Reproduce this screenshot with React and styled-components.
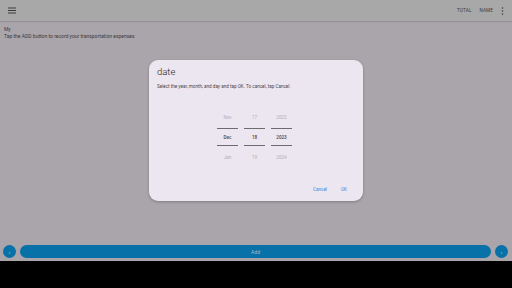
import React from "react";
import styled, { createGlobalStyle } from "styled-components";

const GlobalStyle = createGlobalStyle`
  html, body {
    margin: 0;
    padding: 0;
    width: 512px;
    height: 288px;
    overflow: hidden;
    font-family: Roboto, "Noto Sans", sans-serif;
  }
`;

const Screen = styled.div`
  position: relative;
  width: 512px;
  height: 288px;
  display: flex;
  flex-direction: column;
  background: #aaa5ab;
`;

const AppBar = styled.div`
  height: 21px;
  display: flex;
  align-items: center;
  padding: 0 8px 0 8px;
  background: #a8a8a8;
  box-shadow: 0 1px 1px rgba(0, 0, 0, 0.12);
  color: #3d3d3d;
`;

const Spacer = styled.div`
  flex: 1;
`;

const BarAction = styled.span`
  font-size: 4.5px;
  letter-spacing: 0.2px;
  margin-right: 8px;
  color: #3a3a3a;
`;

const Content = styled.div`
  flex: 1;
  padding: 5px 4px;
  font-size: 5px;
  line-height: 7px;
  color: #3c3a3d;
`;

const BottomRow = styled.div`
  height: 15px;
  display: flex;
  align-items: center;
  gap: 4px;
  padding: 0 4px 2px 3px;
`;

const RoundButton = styled.div`
  width: 13px;
  height: 13px;
  border-radius: 50%;
  background: #0872a8;
  color: #b9c7d3;
  display: flex;
  align-items: center;
  justify-content: center;
  font-size: 6px;
  line-height: 1;
`;

const AddButton = styled.div`
  flex: 1;
  height: 13px;
  border-radius: 7px;
  background: #0872a8;
  color: #a9b7c4;
  display: flex;
  align-items: center;
  justify-content: center;
  font-size: 5px;
`;

const NavBar = styled.div`
  height: 27px;
  background: #000;
`;

const Overlay = styled.div`
  position: absolute;
  left: 0;
  top: 0;
  width: 512px;
  height: 261px;
  display: flex;
  align-items: center;
  justify-content: center;
`;

const Dialog = styled.div`
  width: 214px;
  height: 141px;
  box-sizing: border-box;
  border-radius: 9px;
  background: #ece6f0;
  box-shadow: 0 1px 3px rgba(0, 0, 0, 0.25);
  padding: 6px 8px 8px 8px;
  display: flex;
  flex-direction: column;
`;

const Title = styled.div`
  font-size: 9.5px;
  line-height: 12px;
  font-weight: 300;
  color: #1d1b20;
`;

const Body = styled.div`
  margin-top: 6px;
  font-size: 4.6px;
  color: #49454f;
`;

const Picker = styled.div`
  margin-top: 17px;
  display: flex;
  justify-content: center;
  gap: 6px;
  padding-right: 3px;
`;

const Column = styled.div`
  width: 21px;
  display: flex;
  flex-direction: column;
  align-items: center;
`;

const Cell = styled.div`
  width: 100%;
  height: ${(p) => (p.$selected ? "18px" : "22px")};
  display: flex;
  align-items: center;
  justify-content: center;
  font-size: 4.6px;
  color: ${(p) => (p.$selected ? "#49454f" : "#b3adb8")};
  font-weight: ${(p) => (p.$selected ? 500 : 400)};
  box-sizing: border-box;
  border-top: ${(p) => (p.$selected ? "1px solid #6d6a72" : "none")};
  border-bottom: ${(p) => (p.$selected ? "1px solid #6d6a72" : "none")};
`;

const Actions = styled.div`
  margin-top: auto;
  display: flex;
  justify-content: flex-end;
  gap: 14px;
  padding-right: 8px;
  padding-bottom: 1px;
`;

const TextButton = styled.span`
  font-size: 4.6px;
  color: #2f8fe6;
`;

const MenuIcon = () => (
  <svg width="8" height="7" viewBox="0 0 8 7">
    <rect x="0" y="0.5" width="8" height="1" fill="#3d3d3d" />
    <rect x="0" y="3" width="8" height="1" fill="#3d3d3d" />
    <rect x="0" y="5.5" width="8" height="1" fill="#3d3d3d" />
  </svg>
);

const DotsIcon = () => (
  <svg width="3" height="8" viewBox="0 0 3 8">
    <circle cx="1.5" cy="1" r="0.8" fill="#3d3d3d" />
    <circle cx="1.5" cy="4" r="0.8" fill="#3d3d3d" />
    <circle cx="1.5" cy="7" r="0.8" fill="#3d3d3d" />
  </svg>
);

const columns = [
  ["Nov", "Dec", "Jan"],
  ["17", "18", "19"],
  ["2022", "2023", "2024"],
];

export default function App() {
  return (
    <>
      <GlobalStyle />
      <Screen>
        <AppBar>
          <MenuIcon />
          <Spacer />
          <BarAction>TOTAL</BarAction>
          <BarAction>NAME</BarAction>
          <DotsIcon />
        </AppBar>
        <Content>
          <div>My</div>
          <div>Tap the ADD button to record your transportation expenses</div>
        </Content>
        <BottomRow>
          <RoundButton>‹</RoundButton>
          <AddButton>Add</AddButton>
          <RoundButton>›</RoundButton>
        </BottomRow>
        <NavBar />
        <Overlay>
          <Dialog>
            <Title>date</Title>
            <Body>Select the year, month, and day and tap OK. To cancel, tap Cancel.</Body>
            <Picker>
              {columns.map((col, i) => (
                <Column key={i}>
                  {col.map((v, j) => (
                    <Cell key={v} $selected={j === 1}>
                      {v}
                    </Cell>
                  ))}
                </Column>
              ))}
            </Picker>
            <Actions>
              <TextButton>Cancel</TextButton>
              <TextButton>OK</TextButton>
            </Actions>
          </Dialog>
        </Overlay>
      </Screen>
    </>
  );
}
